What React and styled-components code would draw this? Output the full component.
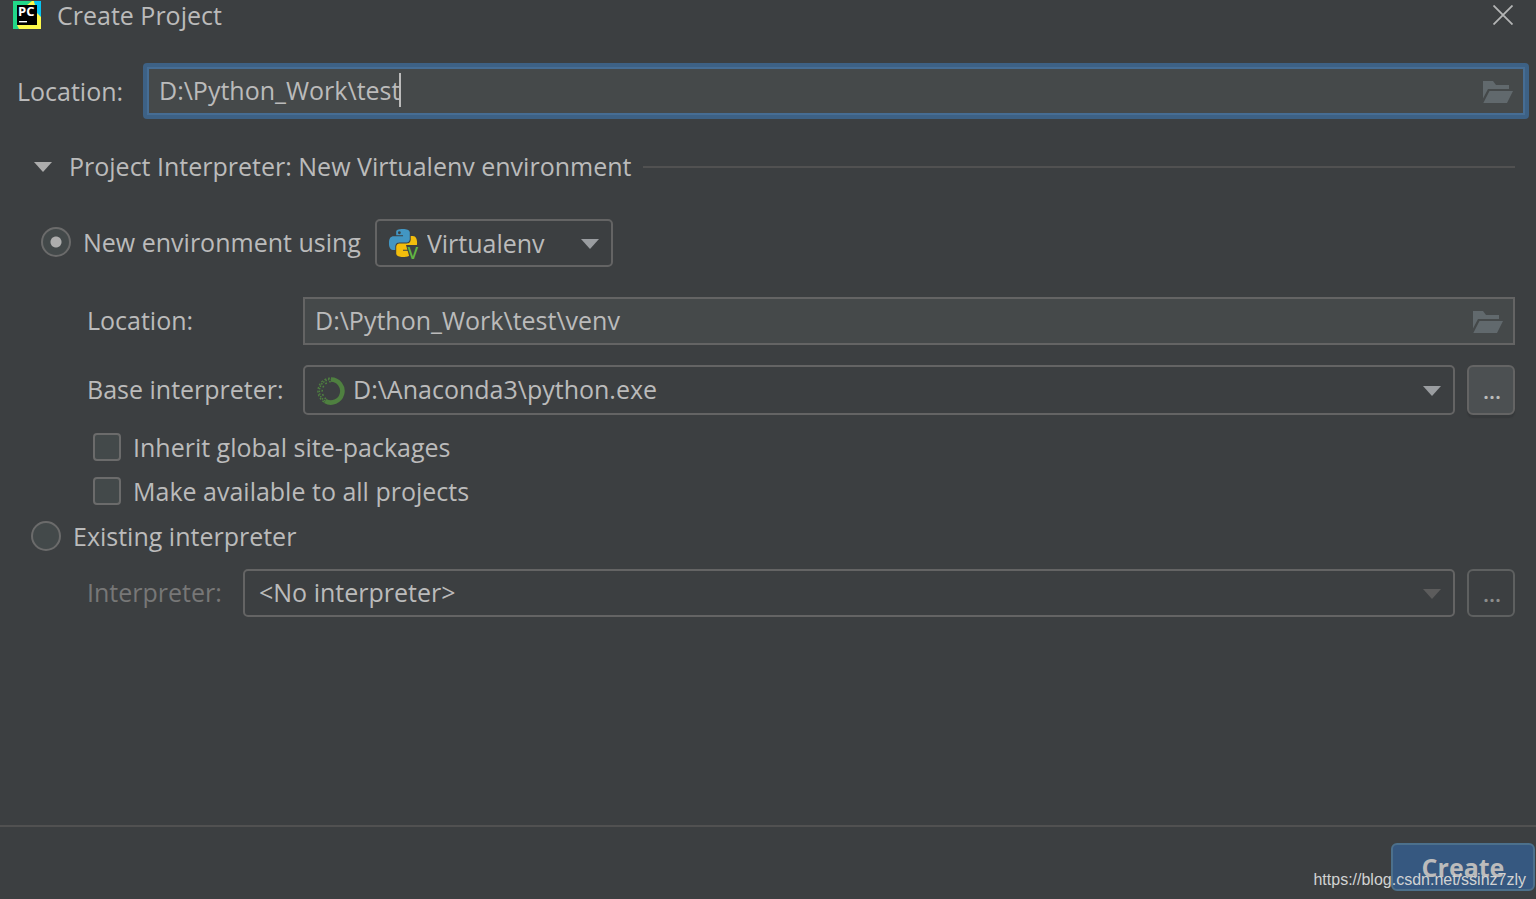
import React from 'react';
import styled, { createGlobalStyle } from 'styled-components';

const GlobalStyle = createGlobalStyle`
    * {
        box-sizing: border-box;
    }
    body {
        margin: 0;
        background-color: #3c3f41;
    }
    body, input, select, button {
        color: #bbbbbb;
        font-family: 'Open Sans', 'Noto Sans', sans-serif;
        font-size: 25px;
        line-height: 34px;
    }
`

const Dialog = styled.main`
    position: relative;
    display: flex;
    flex-direction: column;
    min-height: 100vh;
`

const TitleBar = styled.header`
    display: flex;
    align-items: center;
    height: 30px;
    padding: 0 19px 0 13px;
`

const Title = styled.h1`
    flex: 1;
    margin: 0 0 0 16px;
    font-size: 25px;
    font-weight: 400;
`

const CloseButton = styled.button`
    display: flex;
    padding: 4px 0;
    margin-right: 4px;
    border: none;
    background: none;
`

const LocationRow = styled.div`
    display: flex;
    align-items: center;
    padding: 33px 7px 0 17px;
`

const LocationLabel = styled.label`
    width: 126px;
`

const FocusedField = styled.div`
    flex: 1;
    display: flex;
    align-items: center;
    height: 56px;
    padding: 0 12px;
    border: 4px solid #3d6185;
    border-radius: 4px;
    background-color: #45494a;
    box-shadow: inset 0 0 0 2px #466d94;
`

const PathInput = styled.input`
    flex: ${props => (props.$fit ? 'none' : '1')};
    field-sizing: ${props => (props.$fit ? 'content' : 'fixed')};
    min-width: 0;
    padding: 0 0 3px;
    border: none;
    outline: none;
    background: none;
    caret-color: transparent;
`

const Caret = styled.span`
    width: 2px;
    height: 34px;
    margin: 0 0 3px -1px;
    background-color: #bbbbbb;
`

const BrowseButton = styled.button`
    display: flex;
    margin-left: auto;
    padding: 2px 0 0;
    border: none;
    background: none;
`

const Interpreter = styled.section`
    flex: 1;
    padding: 0 21px 24px 31px;
`

const SectionHeader = styled.div`
    display: flex;
    align-items: center;
    gap: 12px;
    margin-top: 30px;
`

const SectionToggle = styled.button`
    display: flex;
    align-items: center;
    gap: 17px;
    padding: 0 0 0 3px;
    border: none;
    background: none;
`

const SectionLine = styled.div`
    flex: 1;
    height: 4px;
    border-bottom: 2px solid #515151;
`

const EnvironmentRow = styled.div`
    display: flex;
    align-items: center;
    gap: 14px;
    margin: 36px 0 30px 10px;
`

const Choice = styled.label`
    display: flex;
    align-items: center;
    gap: 12px;
    width: fit-content;
    padding-bottom: ${props => (props.$raised ? 2 : 0)}px;
`

const Radio = styled.input`
    appearance: none;
    width: 30px;
    height: 30px;
    margin: 0;
    border: 2px solid #6b6b6b;
    border-radius: 50%;
    background-color: #43494a;

    &:checked {
        background-image: radial-gradient(circle, #adadad 5px, transparent 6px);
    }
`

const Checkbox = styled.input`
    appearance: none;
    width: 28px;
    height: 28px;
    margin: 0;
    border: 2px solid #6b6b6b;
    border-radius: 4px;
    background-color: #43494a;

    &:checked {
        background-color: #adadad;
    }
`

const FormRow = styled.div`
    display: flex;
    align-items: center;
    margin-top: ${props => props.$gap || 0}px;
    padding-left: 56px;
`

const FormLabel = styled.label`
    width: ${props => props.$width}px;
    padding-bottom: 3px;
    color: ${props => (props.$muted ? '#777777' : '#bbbbbb')};
`

const Field = styled.div`
    flex: 1;
    display: flex;
    align-items: center;
    height: 48px;
    padding: 0 10px;
    border: 2px solid #646464;
    background-color: #45494a;
`

const Combo = styled.div`
    flex: ${props => (props.$width ? 'none' : '1')};
    width: ${props => (props.$width ? `${props.$width}px` : 'auto')};
    display: flex;
    align-items: center;
    gap: 8px;
    height: ${props => props.$height || 48}px;
    padding: 0 12px;
    border: 2px solid #646464;
    border-radius: 5px;
`

const Select = styled.select`
    appearance: none;
    flex: 1;
    min-width: 0;
    padding: 0 0 ${props => (props.$raised ? 3 : 0)}px ${props => props.$indent || 0}px;
    border: none;
    outline: none;
    background: none;
    opacity: 1;
    color: #bbbbbb;
`

const MoreButton = styled.button`
    width: 48px;
    height: ${props => props.$height || 48}px;
    margin-left: 12px;
    padding: 0 0 0 2px;
    border: 2px solid ${props => (props.disabled ? '#5e6060' : '#646464')};
    border-radius: 6px;
    background-color: ${props => (props.disabled ? 'transparent' : '#4c5052')};
    box-shadow: ${props => (props.disabled ? 'none' : '0 3px 1px #36393b')};
    color: ${props => (props.disabled ? '#8c8c8c' : '#bbbbbb')};
    font-size: 22px;
    font-weight: 600;
`

const Checks = styled.div`
    display: flex;
    flex-direction: column;
    gap: 10px;
    margin: 15px 0 11px;
    padding-left: 62px;
`

const Footer = styled.footer`
    display: flex;
    justify-content: flex-end;
    padding: 16px 1px 8px;
    border-top: 2px solid #515151;
`

const CreateButton = styled.button`
    width: 144px;
    height: 48px;
    padding: 0;
    border: 2px solid #4c708c;
    border-radius: 6px;
    background-color: #365880;
    font-weight: 700;
`

const Watermark = styled.a`
    position: absolute;
    right: 10px;
    bottom: 8px;
    color: #d2d3d3;
    font-family: 'Liberation Sans', Arial, sans-serif;
    font-size: 16px;
    line-height: 22px;
    text-decoration: none;
`

const ArrowIcon = styled.svg`
    flex: none;
    width: 18px;
    height: 12px;
`

const PyCharmLogo = () => (
    <svg width="28" height="28" viewBox="0 0 28 28" aria-hidden="true">
        <rect width="28" height="28" fill="#21d789" />
        <path d="M14 4L19 0h2l3 9 4 6v13H6l-2-4z" fill="#fcf84a" />
        <path d="M21 0h7v16l-4-4z" fill="#07c3f2" />
        <rect x="4" y="4" width="20" height="20" fill="#000" />
        <text x="5" y="15" fill="#fff" fontFamily="Open Sans, sans-serif" fontSize="13" fontWeight="700">PC</text>
        <path d="M6 20h8v1.400H6z" fill="#fff" />
    </svg>
)

const CloseIcon = () => (
    <svg width="20" height="20" viewBox="0 0 20 20" aria-hidden="true">
        <path d="M0.500 0.500L19.500 19.500M19.500 0.500L0.500 19.500" stroke="#b4b5b5" strokeWidth="1.800" />
    </svg>
)

const FolderIcon = () => (
    <svg width="30" height="22" viewBox="0 0 30 22" aria-hidden="true">
        <path d="M0 0h10l3 4h13v4H5L0 17.500z" fill="#61696d" />
        <path d="M6.500 10H30l-6 12H0.300z" fill="#61696d" />
    </svg>
)

const Arrow = ({ color }) => (
    <ArrowIcon viewBox="0 0 18 12" aria-hidden="true">
        <path d="M0 2h18L9 12z" fill={color} />
    </ArrowIcon>
)

const PythonIcon = () => (
    <svg width="30" height="32" viewBox="0 0 30 32" aria-hidden="true">
        <g transform="translate(0 2) scale(1.1667)">
            <path
                fill="#4296c3"
                d="M14.25.18l.9.2.73.26.59.3.45.32.34.34.25.34.16.33.1.3.04.26.02.2-.01.13V8.5l-.05.63-.13.55-.21.46-.26.38-.3.31-.33.25-.35.19-.35.14-.33.1-.3.07-.26.04-.21.02H8.77l-.69.05-.59.14-.5.22-.41.27-.33.32-.27.35-.2.36-.15.37-.1.35-.07.32-.04.27-.02.21v3.06H3.17l-.21-.03-.28-.07-.32-.12-.35-.18-.36-.26-.36-.36-.35-.46-.32-.59-.28-.73-.21-.88-.14-1.05-.05-1.23.06-1.22.16-1.04.24-.87.32-.71.36-.57.4-.44.42-.33.42-.24.4-.16.36-.1.32-.05.24-.01h.16l.06.01h8.16v-.83H6.18l-.01-2.75-.02-.37.05-.34.11-.31.17-.28.25-.26.31-.23.38-.2.44-.18.51-.15.58-.12.64-.1.71-.06.77-.04.84-.02 1.27.05z"
            />
            <circle cx="8.900" cy="3.200" r="1.200" fill="#3c3f41" />
            <path
                fill="#f2bd0c"
                d="M21.04 6.11l.28.06.32.12.35.18.36.27.36.35.35.47.32.59.28.73.21.88.14 1.04.05 1.23-.06 1.23-.16 1.04-.24.86-.32.71-.36.57-.4.45-.42.33-.42.24-.4.16-.36.09-.32.05-.24.02-.16-.01h-8.22v.82h5.84l.01 2.76.02.36-.05.34-.11.31-.17.29-.25.25-.31.24-.38.2-.44.17-.51.15-.58.13-.64.09-.71.07-.77.04-.84.01-1.27-.04-1.07-.14-.9-.2-.73-.25-.59-.3-.45-.33-.34-.34-.25-.34-.16-.33-.1-.3-.04-.25-.02-.2.01-.13v-5.34l.05-.64.13-.54.21-.46.26-.38.3-.32.33-.24.35-.2.35-.14.33-.1.3-.06.26-.04.21-.02.13-.01h5.84l.69-.05.59-.14.5-.21.41-.28.33-.32.27-.35.2-.36.15-.36.1-.35.07-.32.04-.28.02-.21V6.07h2.09z"
            />
        </g>
        <path d="M17 18h13v14h-9z" fill="#3c3f41" />
        <text x="18.500" y="31.500" fill="#62b543" fontFamily="Open Sans, sans-serif" fontSize="17" fontWeight="600">V</text>
    </svg>
)

const AnacondaIcon = () => (
    <svg width="28" height="30" viewBox="0 -2 28 30" fill="none" stroke="#4f8040" aria-hidden="true">
        <path d="M14 2.500A11.500 11.500 0 1 1 8.200 24" strokeWidth="4.600" />
        <path d="M8.200 24A11.500 11.500 0 0 1 14 2.500" strokeWidth="1.500" strokeDasharray="1.500 1.200" />
        <path d="M7 25A13 13 0 0 1 14 1" strokeWidth="1.300" strokeDasharray="2 1.800" />
        <path d="M9 22A9.800 9.800 0 0 1 14 4.500" strokeWidth="1.500" strokeDasharray="1.800 2.400" />
    </svg>
)

const App = () => {
    return (
        <>
            <GlobalStyle />
            <Dialog>
                <TitleBar>
                    <PyCharmLogo />
                    <Title>Create Project</Title>
                    <CloseButton aria-label="Close"><CloseIcon /></CloseButton>
                </TitleBar>
                <LocationRow>
                    <LocationLabel htmlFor="location">Location:</LocationLabel>
                    <FocusedField>
                        <PathInput id="location" $fit defaultValue="D:\Python_Work\test" />
                        <Caret />
                        <BrowseButton aria-label="Browse"><FolderIcon /></BrowseButton>
                    </FocusedField>
                </LocationRow>
                <Interpreter>
                    <SectionHeader>
                        <SectionToggle aria-expanded="true">
                            <Arrow color="#adadad" />
                            Project Interpreter: New Virtualenv environment
                        </SectionToggle>
                        <SectionLine />
                    </SectionHeader>
                    <EnvironmentRow>
                        <Choice $raised>
                            <Radio type="radio" name="environment" defaultChecked />
                            New environment using
                        </Choice>
                        <Combo $width={238}>
                            <PythonIcon />
                            <Select aria-label="Environment tool">
                                <option>Virtualenv</option>
                            </Select>
                            <Arrow color="#9a9da0" />
                        </Combo>
                    </EnvironmentRow>
                    <FormRow>
                        <FormLabel htmlFor="venv" $width={216}>Location:</FormLabel>
                        <Field>
                            <PathInput id="venv" defaultValue="D:\Python_Work\test\venv" />
                            <BrowseButton aria-label="Browse"><FolderIcon /></BrowseButton>
                        </Field>
                    </FormRow>
                    <FormRow $gap={20}>
                        <FormLabel htmlFor="base" $width={216}>Base interpreter:</FormLabel>
                        <Combo $height={50}>
                            <AnacondaIcon />
                            <Select id="base" $raised>
                                <option>D:\Anaconda3\python.exe</option>
                            </Select>
                            <Arrow color="#9a9da0" />
                        </Combo>
                        <MoreButton $height={50}>...</MoreButton>
                    </FormRow>
                    <Checks>
                        <Choice>
                            <Checkbox type="checkbox" />
                            Inherit global site-packages
                        </Choice>
                        <Choice>
                            <Checkbox type="checkbox" />
                            Make available to all projects
                        </Choice>
                    </Checks>
                    <Choice $raised>
                        <Radio type="radio" name="environment" />
                        Existing interpreter
                    </Choice>
                    <FormRow $gap={14}>
                        <FormLabel htmlFor="existing" $width={156} $muted>Interpreter:</FormLabel>
                        <Combo>
                            <Select id="existing" $indent={2} $raised disabled>
                                <option>&lt;No interpreter&gt;</option>
                            </Select>
                            <Arrow color="#5c5c5c" />
                        </Combo>
                        <MoreButton disabled>...</MoreButton>
                    </FormRow>
                </Interpreter>
                <Footer>
                    <CreateButton>Create</CreateButton>
                </Footer>
                <Watermark href="https://blog.csdn.net/ssinz7zly">https://blog.csdn.net/ssinz7zly</Watermark>
            </Dialog>
        </>
    );
}

export default App;
